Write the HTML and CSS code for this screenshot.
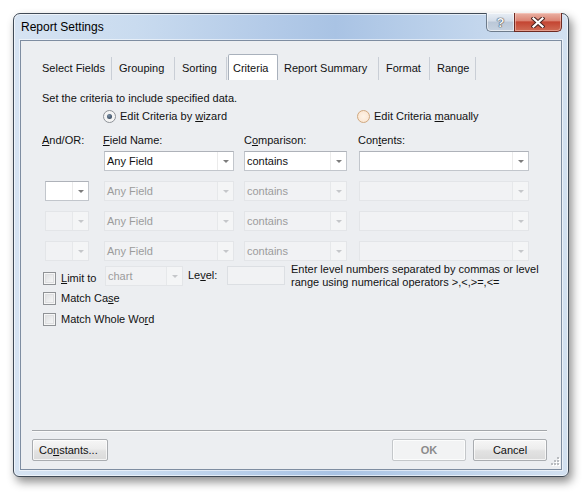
FILE: index.html
```html
<!DOCTYPE html>
<html>
<head>
<meta charset="utf-8">
<title>Report Settings</title>
<link rel="stylesheet" href="styles.css">
</head>
<body>
<div class="window">
  <div class="titlebar">
    <div class="title">Report Settings</div>
    <div class="caption-btns">
      <div class="cbtn help">?</div>
      <div class="cbtn close">
        <svg width="14" height="11" viewBox="0 0 14 11">
          <path d="M2.5 1.5 L11.5 9.5 M11.5 1.5 L2.5 9.5" stroke="#4a2420" stroke-width="4.2" stroke-linecap="square" fill="none"/>
          <path d="M2.5 1.5 L11.5 9.5 M11.5 1.5 L2.5 9.5" stroke="#ffffff" stroke-width="2.2" stroke-linecap="square" fill="none"/>
        </svg>
      </div>
    </div>
  </div>
  <div class="client">
    <div class="tabs">
      <div class="tab t-select">Select Fields</div>
      <div class="tab t-group">Grouping</div>
      <div class="tab t-sort">Sorting</div>
      <div class="tab active t-crit">Criteria</div>
      <div class="tab t-summary">Report Summary</div>
      <div class="tab t-format">Format</div>
      <div class="tab t-range">Range</div>
    </div>
    <div class="page">
      <div class="intro">Set the criteria to include specified data.</div>
      <div class="cols radios">
        <div class="radio-item c-field"><span class="radio checked"></span><span>Edit Criteria by <u>w</u>izard</span></div>
        <div class="radio-item c-contents"><span class="radio hover"></span><span>Edit Criteria <u>m</u>anually</span></div>
      </div>
      <div class="cols labels">
        <div class="lbl l-andor"><u>A</u>nd/OR:</div>
        <div class="lbl l-field"><u>F</u>ield Name:</div>
        <div class="lbl l-comp">C<u>o</u>mparison:</div>
        <div class="lbl l-cont">Con<u>t</u>ents:</div>
      </div>
      <div class="cols rows">
        <div></div>
        <div class="combo w-field"><span class="val">Any Field</span><span class="arrow"><i></i></span></div>
        <div class="combo w-comp"><span class="val">contains</span><span class="arrow"><i></i></span></div>
        <div class="combo w-cont"><span class="val"></span><span class="arrow"><i></i></span></div>

        <div class="combo w-andor"><span class="val"></span><span class="arrow"><i></i></span></div>
        <div class="combo off w-field"><span class="val">Any Field</span><span class="arrow"><i></i></span></div>
        <div class="combo off w-comp"><span class="val">contains</span><span class="arrow"><i></i></span></div>
        <div class="combo off w-cont"><span class="val"></span><span class="arrow"><i></i></span></div>

        <div class="combo off w-andor"><span class="val"></span><span class="arrow"><i></i></span></div>
        <div class="combo off w-field"><span class="val">Any Field</span><span class="arrow"><i></i></span></div>
        <div class="combo off w-comp"><span class="val">contains</span><span class="arrow"><i></i></span></div>
        <div class="combo off w-cont"><span class="val"></span><span class="arrow"><i></i></span></div>

        <div class="combo off w-andor"><span class="val"></span><span class="arrow"><i></i></span></div>
        <div class="combo off w-field"><span class="val">Any Field</span><span class="arrow"><i></i></span></div>
        <div class="combo off w-comp"><span class="val">contains</span><span class="arrow"><i></i></span></div>
        <div class="combo off w-cont"><span class="val"></span><span class="arrow"><i></i></span></div>
      </div>
      <div class="limit-row">
        <div class="check-item limit"><span class="checkbox"></span><span><u>L</u>imit to</span></div>
        <div class="combo off w-chart"><span class="val">chart</span><span class="arrow"><i></i></span></div>
        <div class="level-lbl">Le<u>v</u>el:</div>
        <div class="level-input"></div>
        <div class="hint">Enter level numbers separated by commas or level<br>range using numerical operators &gt;,&lt;,&gt;=,&lt;=</div>
      </div>
      <div class="check-item case"><span class="checkbox"></span><span>Match Ca<u>s</u>e</span></div>
      <div class="check-item whole"><span class="checkbox"></span><span>Match Whole Wo<u>r</u>d</span></div>
    </div>
    <div class="footer">
      <div class="sep"></div>
      <div class="btn-row">
        <div class="btn constants">Co<u>n</u>stants...</div>
        <div class="spacer"></div>
        <div class="btn ok disabled">OK</div>
        <div class="btn cancel">Cancel</div>
      </div>
    </div>
    <svg class="grip" width="11" height="11" viewBox="0 0 11 11">
      <g fill="#ffffff">
        <rect x="9" y="1" width="2" height="2"/><rect x="6" y="4" width="2" height="2"/><rect x="9" y="4" width="2" height="2"/>
        <rect x="3" y="7" width="2" height="2"/><rect x="6" y="7" width="2" height="2"/><rect x="9" y="7" width="2" height="2"/>
      </g>
      <g fill="#b9bcc0">
        <rect x="8" y="0" width="2" height="2"/><rect x="5" y="3" width="2" height="2"/><rect x="8" y="3" width="2" height="2"/>
        <rect x="2" y="6" width="2" height="2"/><rect x="5" y="6" width="2" height="2"/><rect x="8" y="6" width="2" height="2"/>
      </g>
    </svg>
  </div>
</div>
</body>
</html>
```

FILE: styles.css
```css
html, body {
  margin: 0;
  padding: 0;
  background: #ffffff;
}
body {
  width: 587px;
  height: 497px;
  overflow: hidden;
  font-family: "Liberation Sans", Arial, sans-serif;
  font-size: 11px;
  color: #111;
}
u {
  text-decoration: underline;
  text-underline-offset: 1px;
  text-decoration-thickness: 1px;
}

.window {
  margin: 13px 0 0 13px;
  width: 556px;
  height: 464px;
  box-sizing: border-box;
  border: 1px solid #404a56;
  border-radius: 7px 7px 6px 6px;
  padding: 0 6px 6px 6px;
  display: flex;
  flex-direction: column;
  background: linear-gradient(90deg, #d6e3f2 0%, #c9dbef 22%, #b4cbe8 45%, #a9c3e4 58%, #bdd2eb 78%, #d3e1f1 100%);
  box-shadow: inset 0 0 0 1px rgba(255,255,255,0.6), 3px 5px 10px rgba(0,0,0,0.45);
}

.titlebar {
  height: 26px;
  display: flex;
  justify-content: space-between;
  align-items: flex-start;
}
.title {
  font-size: 12px;
  line-height: 13px;
  padding: 7px 0 0 1px;
  color: #000;
}
.caption-btns {
  display: flex;
  margin-top: -1px;
}
.cbtn {
  height: 19px;
  box-sizing: border-box;
  display: flex;
  align-items: center;
  justify-content: center;
}
.help {
  width: 28px;
  border: 1px solid #6d7b8b;
  border-top: none;
  border-right: none;
  border-radius: 0 0 0 5px;
  background: linear-gradient(#e8eef5 0%, #d3dce8 45%, #bac7d7 50%, #c6d2e0 100%);
  box-shadow: inset 0 0 0 1px rgba(255,255,255,0.55);
  font-weight: bold;
  font-size: 13px;
  color: #f4f6f8;
  text-shadow: 0 0 1px #3d4650, 0 0 1px #3d4650, 0 0 1px #3d4650;
}
.close {
  width: 48px;
  border: 1px solid #6e2a22;
  border-top: none;
  border-radius: 0 0 5px 0;
  background: linear-gradient(#eab1a4 0%, #dc8574 42%, #c44532 50%, #d06c55 100%);
  box-shadow: inset 0 0 0 1px rgba(255,220,210,0.45);
}

.client {
  flex: 1;
  position: relative;
  border: 1px solid #7e8da1;
  background: #eceef1;
  display: flex;
  flex-direction: column;
  box-shadow: 0 0 0 1px rgba(255,255,255,0.55);
}

.tabs {
  display: flex;
  align-items: flex-end;
  height: 26px;
  margin-top: 13px;
  padding-left: 16px;
}
.tab {
  height: 23px;
  line-height: 23px;
  box-sizing: content-box;
  border-right: 1px solid #c9ced6;
  white-space: nowrap;
}
.t-select { width: 69px; padding-left: 5px; }
.t-group { width: 55px; padding-left: 7px; }
.t-sort { width: 44px; padding-left: 7px; }
.t-summary { width: 94px; padding-left: 6px; }
.t-format { width: 43px; padding-left: 7px; }
.t-range { width: 38px; padding-left: 7px; }
.tab.active {
  width: 50px;
  height: 26px;
  box-sizing: border-box;
  padding: 2px 0 0 4px;
  line-height: 23px;
  background: #ffffff;
  border: 1px solid #a9b1bc;
  border-bottom: none;
  border-radius: 2px 2px 0 0;
  margin-left: 1px;
}

.page {
  padding-left: 21px;
}
.intro {
  margin-top: 12px;
  line-height: 13px;
}

.cols {
  display: grid;
  grid-template-columns: 59px 140px 115px 170px;
  margin-left: 3px;
}
.radios {
  margin-top: 5px;
  height: 13px;
}
.radio-item {
  display: flex;
  align-items: center;
  gap: 4px;
  line-height: 13px;
  white-space: nowrap;
}
.c-field { grid-column: 2 / span 2; margin-left: -1px; }
.c-contents { grid-column: 4; margin-left: -2px; }
.radio {
  width: 13px;
  height: 13px;
  box-sizing: border-box;
  border-radius: 50%;
  border: 1px solid #8e9298;
  background: radial-gradient(circle at 50% 50%, #ececec 0%, #f7f7f7 70%, #e3e3e3 100%);
  display: flex;
  align-items: center;
  justify-content: center;
}
.radio.checked::after {
  content: "";
  width: 5px;
  height: 5px;
  border-radius: 50%;
  background: radial-gradient(circle at 40% 35%, #7a8fa6 0%, #34475c 80%);
}
.radio.hover {
  border-color: #d0a880;
  background: radial-gradient(circle at 50% 50%, #fdf3e8 0%, #fbe7d4 70%, #f3d7bd 100%);
}

.labels {
  margin-top: 11px;
  line-height: 13px;
}
.l-andor { margin-left: -3px; }
.l-field { margin-left: -1px; }
.l-cont { margin-left: -1px; }

.rows {
  margin-top: 4px;
  row-gap: 10px;
}
.combo {
  height: 20px;
  box-sizing: border-box;
  display: flex;
  border: 1px solid #c2c6cc;
  border-top-color: #aeb2b9;
  background: #ffffff;
}
.w-andor { width: 44px; }
.w-field { width: 130px; }
.w-comp { width: 103px; }
.w-cont { width: 170px; }
.w-chart { width: 78px; }
.combo .val {
  flex: 1;
  padding-left: 2px;
  line-height: 18px;
  white-space: nowrap;
  overflow: hidden;
}
.combo .arrow {
  width: 15px;
  border-left: 1px solid #ebebeb;
  display: flex;
  align-items: center;
  justify-content: center;
}
.combo .arrow i {
  width: 0;
  height: 0;
  border-left: 3px solid transparent;
  border-right: 3px solid transparent;
  border-top: 3px solid #7c7c7c;
}
.combo.off {
  background: #f1f2f4;
  border-color: #e3e5e8;
  color: #9c9c9c;
}
.combo.off .arrow {
  background: #f4f5f6;
  border-left: 1px solid #e6e8ea;
}
.combo.off .arrow i {
  border-top-color: #c5c7ca;
}

.limit-row {
  display: flex;
  align-items: flex-start;
  margin-top: 2px;
  margin-left: 1px;
}
.check-item {
  display: flex;
  align-items: center;
  gap: 5px;
  line-height: 13px;
  white-space: nowrap;
}
.check-item.limit {
  width: 62px;
  margin-top: 9px;
}
.checkbox {
  width: 13px;
  height: 13px;
  box-sizing: border-box;
  border: 1px solid #8f9296;
  background: linear-gradient(135deg, #d9dadc 0%, #eeeff0 60%, #fafafa 100%);
  box-shadow: inset 0 0 0 1px #f6f6f6, inset 0 0 0 2px #dedfe1;
  flex: none;
}
.limit-row .w-chart {
  margin-top: 3px;
}
.level-lbl {
  width: 39px;
  margin-left: 5px;
  margin-top: 6px;
  line-height: 13px;
}
.level-input {
  width: 58px;
  height: 19px;
  box-sizing: border-box;
  margin-top: 3px;
  border: 1px solid #dcdfe3;
  background: #f1f2f4;
}
.hint {
  margin-left: 6px;
  line-height: 13px;
  white-space: nowrap;
}
.check-item.case {
  margin-top: 3px;
  margin-left: 1px;
}
.check-item.whole {
  margin-top: 8px;
  margin-left: 1px;
}

.footer {
  margin-top: auto;
  padding: 0 14px 8px 11px;
}
.sep {
  height: 1px;
  background: #a3a6aa;
  border-bottom: 1px solid #fafafa;
  margin-bottom: 7px;
}
.btn-row {
  display: flex;
  gap: 7px;
}
.spacer { flex: 1; }
.btn {
  height: 22px;
  box-sizing: border-box;
  border: 1px solid #a9acb0;
  border-radius: 2px;
  background: linear-gradient(#f6f6f6 0%, #ededed 45%, #e2e2e2 55%, #dadada 100%);
  box-shadow: inset 0 0 0 1px rgba(255,255,255,0.7);
  display: flex;
  align-items: center;
  justify-content: center;
  line-height: 13px;
  white-space: nowrap;
}
.constants { width: 76px; justify-content: flex-start; padding-left: 6px; }
.ok, .cancel { width: 74px; }
.btn.disabled {
  border-color: #c4c7ca;
  background: #f2f3f4;
  color: #8b8b8b;
  font-weight: bold;
}

.grip {
  position: absolute;
  right: 1px;
  bottom: 1px;
}
```
